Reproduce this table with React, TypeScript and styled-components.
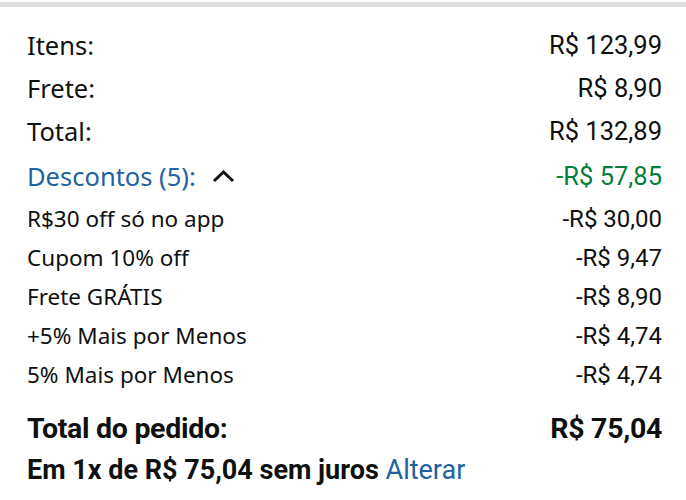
import React from "react";
import styled, { createGlobalStyle } from "styled-components";

const Global = createGlobalStyle`
  html, body { margin: 0; padding: 0; background: #fff; }
  body { font-family: Roboto, "Noto Sans", sans-serif; color: #0f1111; }
`;

const Page = styled.div`
  width: 686px;
  height: 500px;
  box-sizing: border-box;
  border-top: 2px solid #fff;
  overflow: hidden;
`;

const TopBar = styled.div`
  height: 5px;
  background: #dcdcdc;
`;

const Summary = styled.div`
  padding: 16px 24px 0 27px;
  display: flex;
  flex-direction: column;
`;

const Row = styled.div<{ $h: number }>`
  display: flex;
  justify-content: space-between;
  align-items: center;
  height: ${(p) => p.$h}px;
`;

const MainLabel = styled.span<{ $color?: string }>`
  font-family: "Noto Sans", sans-serif;
  font-size: 25.5px;
  color: ${(p) => p.$color || "#0f1111"};
  display: flex;
  align-items: center;
  gap: 16px;
`;

const MainValue = styled.span<{ $color?: string }>`
  font-size: 25.5px;
  color: ${(p) => p.$color || "#0f1111"};
`;

const SmallLabel = styled.span`
  font-family: "Noto Sans", sans-serif;
  font-size: 22.5px;
  color: #0f1111;
`;

const SmallValue = styled.span`
  font-size: 24px;
  color: #0f1111;
`;

const BoldText = styled.span`
  font-weight: 700;
  font-size: 28.5px;
  letter-spacing: -0.3px;
`;

const Installments = styled.div`
  font-weight: 700;
  font-size: 27px;
  letter-spacing: 0;
  margin-top: 6px;
`;

const Link = styled.span`
  font-weight: 400;
  color: #2162a1;
`;

const Chevron = () => (
  <svg width="23" height="14" viewBox="0 0 23 14">
    <path d="M2 12 L11.5 3 L21 12" fill="none" stroke="#0f1111" strokeWidth="3" />
  </svg>
);

const Spacer = styled.div<{ $h: number }>`
  height: ${(p) => p.$h}px;
`;

const discounts = [
  ["R$30 off só no app", "-R$ 30,00"],
  ["Cupom 10% off", "-R$ 9,47"],
  ["Frete GRÁTIS", "-R$ 8,90"],
  ["+5% Mais por Menos", "-R$ 4,74"],
  ["5% Mais por Menos", "-R$ 4,74"],
];

export default function App() {
  return (
    <Page>
      <Global />
      <TopBar />
      <Summary>
        <Row $h={43}>
          <MainLabel>Itens:</MainLabel>
          <MainValue>R$ 123,99</MainValue>
        </Row>
        <Row $h={43}>
          <MainLabel>Frete:</MainLabel>
          <MainValue>R$ 8,90</MainValue>
        </Row>
        <Row $h={43}>
          <MainLabel>Total:</MainLabel>
          <MainValue>R$ 132,89</MainValue>
        </Row>
        <Row $h={47}>
          <MainLabel $color="#2162a1">
            Descontos (5): <Chevron />
          </MainLabel>
          <MainValue $color="#067d3a">-R$ 57,85</MainValue>
        </Row>
        {discounts.map(([l, v]) => (
          <Row $h={39} key={l}>
            <SmallLabel>{l}</SmallLabel>
            <SmallValue>{v}</SmallValue>
          </Row>
        ))}
        <Spacer $h={14} />
        <Row $h={40}>
          <BoldText>Total do pedido:</BoldText>
          <BoldText>R$ 75,04</BoldText>
        </Row>
        <Installments>
          Em 1x de R$ 75,04 sem juros <Link>Alterar</Link>
        </Installments>
      </Summary>
    </Page>
  );
}
